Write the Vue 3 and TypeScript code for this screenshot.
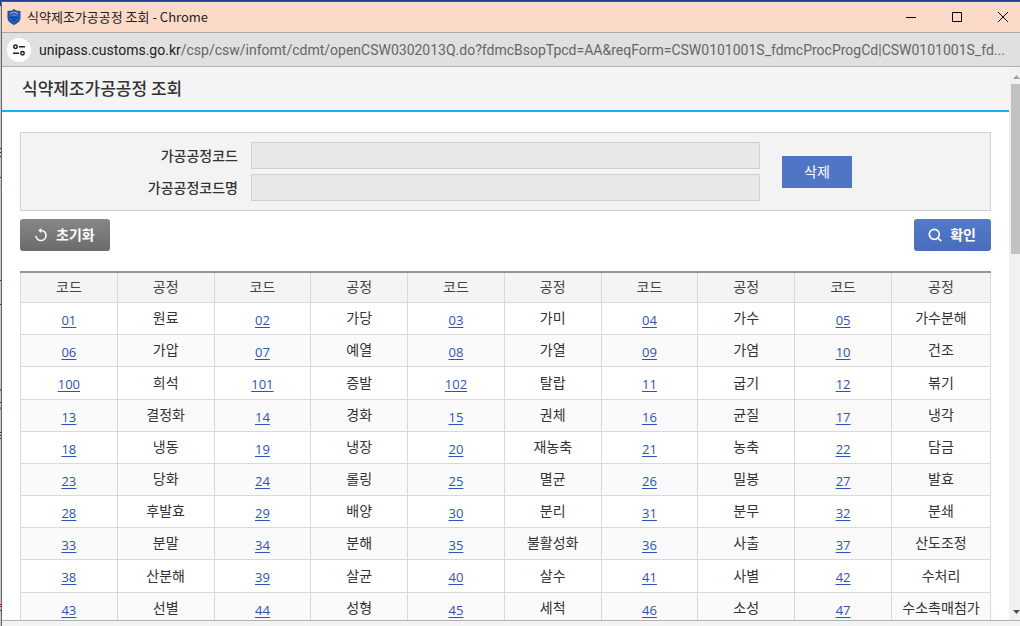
<script setup lang="ts">
import { ref } from 'vue'

interface Process {
  code: string
  name: string
}

const source: string[] = [
  '01 원료|02 가당|03 가미|04 가수|05 가수분해',
  '06 가압|07 예열|08 가열|09 가염|10 건조',
  '100 희석|101 증발|102 탈랍|11 굽기|12 볶기',
  '13 결정화|14 경화|15 권체|16 균질|17 냉각',
  '18 냉동|19 냉장|20 재농축|21 농축|22 담금',
  '23 당화|24 롤링|25 멸균|26 밀봉|27 발효',
  '28 후발효|29 배양|30 분리|31 분무|32 분쇄',
  '33 분말|34 분해|35 불활성화|36 사출|37 산도조정',
  '38 산분해|39 살균|40 살수|41 사별|42 수처리',
  '43 선별|44 성형|45 세척|46 소성|47 수소촉매첨가',
]

const rows: Process[][] = source.map((line) =>
  line.split('|').map((pair) => {
    const [code, name] = pair.split(' ')
    return { code, name }
  }),
)

const selectedCode = ref('')
const selectedName = ref('')

function select(item: Process) {
  selectedCode.value = item.code
  selectedName.value = item.name
}

function clear() {
  selectedCode.value = ''
  selectedName.value = ''
}
</script>

<template>
  <div class="desktop">
    <div class="window">
      <div class="titlebar">
        <svg class="shield" width="14" height="16" viewBox="0 0 14 16" aria-hidden="true">
          <path d="M7 0 9 1.5 13.5 2V9C13.5 12.5 10 14.6 7 16 4 14.6.5 12.5.5 9V2L5 1.5Z" fill="#24508c" />
          <path d="M7 2 12 3.4V9C12 11.5 9.5 13 7 14.2 4.500 13 2 11.500 2 9V3.400Z" fill="#1467d2" />
          <path d="M3 4.500 7 3l4 1.500" fill="none" stroke="#8fb4d9" />
          <path d="M4.500 6.200h5" stroke="#d8564e" stroke-width="1.400" />
          <path d="M3 8.500h8M5 11h4" stroke="#123f94" stroke-width="1.400" />
        </svg>
        <span class="window-title">식약제조가공공정 조회 - Chrome</span>
        <div class="controls">
          <button type="button" aria-label="최소화">
            <svg width="10" height="10" viewBox="0 0 10 10"><path d="M0 5.500h10" /></svg>
          </button>
          <button type="button" aria-label="최대화">
            <svg width="10" height="10" viewBox="0 0 10 10"><path d="M.5.5h9v9h-9z" /></svg>
          </button>
          <button type="button" aria-label="닫기">
            <svg width="10" height="10" viewBox="0 0 10 10"><path d="m0 0 10 10M10 0 0 10" /></svg>
          </button>
        </div>
      </div>

      <div class="addressbar">
        <button type="button" class="site-info" aria-label="사이트 정보">
          <svg width="12" height="12" viewBox="0 0 12 12" fill="none" stroke="#222" stroke-width="1.500">
            <circle cx="2.500" cy="2.700" r="1.700" />
            <path d="M6 2.700h6M0 9.300h6" />
            <circle cx="9.500" cy="9.300" r="1.700" />
          </svg>
        </button>
        <span class="url"><b>unipass.customs.go.kr</b>/csp/csw/infomt/cdmt/openCSW0302013Q.do?fdmcBsopTpcd=AA&amp;reqForm=CSW0101001S_fdmcProcProgCd|CSW0101001S_fd...</span>
      </div>

      <div class="viewport">
        <main class="page">
          <h1>식약제조가공공정 조회</h1>
          <div class="content">
            <form class="search" @submit.prevent>
              <div class="fields">
                <label for="code">가공공정코드</label>
                <input id="code" v-model="selectedCode" type="text" readonly />
                <label for="name">가공공정코드명</label>
                <input id="name" v-model="selectedName" type="text" readonly />
              </div>
              <button type="button" class="delete" @click="clear">삭제</button>
            </form>

            <div class="actions">
              <button type="button" class="action reset" @click="clear">
                <svg width="14" height="14" viewBox="0 0 14 14" fill="none" stroke="currentColor" stroke-width="1.700">
                  <path d="M5.500 2.500H7A5 5 0 1 1 2 8" />
                  <path d="M7.200 0v5L4.200 2.500z" fill="currentColor" stroke="none" />
                </svg>
                <span>초기화</span>
              </button>
              <button type="button" class="action confirm">
                <svg width="14" height="14" viewBox="0 0 14 14" fill="none" stroke="currentColor" stroke-width="1.700">
                  <circle cx="6.300" cy="6.300" r="5" />
                  <path d="m10 10 3.200 3.200" />
                </svg>
                <span>확인</span>
              </button>
            </div>

            <table>
              <thead>
                <tr>
                  <template v-for="n in 5" :key="n">
                    <th scope="col">코드</th>
                    <th scope="col">공정</th>
                  </template>
                </tr>
              </thead>
              <tbody>
                <tr v-for="(row, i) in rows" :key="i">
                  <template v-for="item in row" :key="item.code">
                    <td class="code"><a href="#" @click.prevent="select(item)">{{ item.code }}</a></td>
                    <td>{{ item.name }}</td>
                  </template>
                </tr>
              </tbody>
            </table>
          </div>
        </main>
        <div class="scrollbar" aria-hidden="true">
          <svg width="7" height="4" viewBox="0 0 7 4"><path d="M0 4 3.500 0 7 4z" fill="#a3a3a3" /></svg>
          <div class="thumb"></div>
          <svg width="7" height="4" viewBox="0 0 7 4"><path d="M0 0h7L3.500 4z" fill="#505050" /></svg>
        </div>
      </div>
    </div>
  </div>
</template>

<style>
body {
  margin: 0;
}
</style>

<style scoped>
* {
  box-sizing: border-box;
}

/* The one-pixel strip on the left shows the window behind this one. */
.desktop {
  height: 100vh;
  overflow: hidden;
  padding-left: 1px;
  background: linear-gradient(
    #1f3f91 0 6px, #c9c9c9 6px 148px, #333 148px 149px, #c9c9c9 149px 152px, #333 152px 153px,
    #c9c9c9 153px 156px, #333 156px 157px, #c9c9c9 157px 177px, #333 177px 178px, #c9c9c9 178px 183px,
    #c8c88a 183px 188px, #c9c9c9 188px 280px, #7a2a2a 280px 281px, #c9c9c9 281px 304px, #333 304px 305px,
    #c9c9c9 305px 389px, #777 389px 391px, #c9c9c9 391px 402px, #333 402px 403px, #c9c9c9 403px 407px,
    #b5884a 407px 410px, #c9c9c9 410px 432px, #333 432px 433px, #c9c9c9 433px 435px, #333 435px 436px,
    #c9c9c9 436px 438px, #333 438px 439px, #c9c9c9 439px 604px, #c00 604px 605px, #c9c9c9 605px 606px,
    #c00 606px 607px, #c9c9c9 607px 610px, #c00 610px 611px, #c9c9c9 611px
  );
  font-family: "Noto Sans CJK KR", sans-serif;
  font-size: 14px;
  color: #333;
}

.window {
  display: flex;
  flex-direction: column;
  height: 100%;
  border-top: 1px solid #1f3f91;
  border-left: 1px solid #666;
  background: #f3f3f3;
  padding-bottom: 5px;
}

.titlebar {
  display: flex;
  flex: none;
  align-items: center;
  height: 32px;
  padding-left: 5px;
  border-top: 1px solid #4a5480;
  border-bottom: 1px solid #aaa;
  background: #fcdac8;
}

.window-title {
  margin-left: 6px;
  font-size: 13px;
  line-height: 20px;
  color: #222;
}

.controls {
  display: flex;
  margin-left: auto;
  height: 100%;
}

.controls button {
  display: grid;
  place-items: center;
  width: 46px;
  padding: 0;
  border: 0;
  background: none;
}

.controls button:last-child {
  width: 40px;
  padding-left: 6px;
}

.controls path {
  fill: none;
  stroke: #000;
}

.addressbar {
  display: flex;
  flex: none;
  align-items: center;
  gap: 8px;
  height: 34px;
  padding: 0 0 0 5px;
  border-bottom: 1px solid #b0b0b0;
  background: #e0e0e0;
}

.site-info {
  display: grid;
  flex: none;
  place-items: center;
  width: 24px;
  height: 24px;
  padding: 0;
  border: 0;
  border-radius: 50%;
  background: #fff;
}

.url {
  overflow: hidden;
  font-family: Roboto, sans-serif;
  font-size: 14px;
  line-height: 20px;
  color: #666;
  white-space: nowrap;
}

.url b {
  font-weight: 400;
  color: #222;
}

.viewport {
  display: flex;
  flex: 1;
  min-height: 0;
  border-bottom: 1px solid #b0b0b0;
  background: #fff;
}

.page {
  flex: 1;
  min-width: 0;
  overflow: hidden;
}

h1 {
  margin: 0;
  padding: 0 20px 1px;
  border-bottom: 2px solid #16b0f4;
  background: #f4f4f4;
  font-size: 17px;
  font-weight: 500;
  line-height: 42px;
}

.content {
  padding: 20px 18px 0;
}

.search {
  display: flex;
  align-items: center;
  height: 79px;
  border: 1px solid #d2d2d2;
  background: #f3f3f3;
}

.fields {
  display: grid;
  flex: 0 1 739px;
  grid-template-columns: 217px 1fr;
  gap: 5px 13px;
  align-items: center;
}

label {
  padding-bottom: 2px;
  font-weight: 500;
  line-height: 20px;
  text-align: right;
}

input {
  width: 100%;
  min-width: 0;
  height: 27px;
  padding: 0 6px;
  border: 1px solid #d0d0d0;
  background: #e8e8e8;
  color: inherit;
  font: inherit;
}

.delete {
  width: 70px;
  height: 32px;
  margin-left: 22px;
  padding: 0 0 2px;
  border: 0;
  background: #4f75c5;
  color: #fff;
  font: inherit;
}

.actions {
  display: flex;
  justify-content: space-between;
  margin: 8px 0 20px;
}

.action {
  display: flex;
  align-items: center;
  gap: 8px;
  height: 32px;
  padding: 0 15px 0 14px;
  border: 0;
  border-radius: 3px;
  color: #fff;
  font: inherit;
  font-weight: 700;
}

.action span {
  padding-bottom: 2px;
}

.reset {
  background: linear-gradient(#878787, #6b6b6b);
}

.confirm {
  background: linear-gradient(#527bcd, #496dba);
}

table {
  width: 100%;
  border-collapse: collapse;
  border-top: 2px solid #959595;
  table-layout: fixed;
  text-align: center;
}

th,
td {
  height: 32px;
  padding: 0 0 2px;
  border: 1px solid #d9d9d9;
  line-height: 20px;
  white-space: nowrap;
}

th {
  height: 30px;
  border-top: 2px solid #959595;
  background: #f4f4f4;
  color: #444;
  font-weight: 400;
}

th:last-child {
  width: 99px;
}

tbody tr:nth-child(even) {
  background: #fafafa;
}

tbody tr:nth-child(6n + 3) td {
  height: 33px;
}

td.code {
  padding: 3px 0 0;
  font-family: "Open Sans", "Noto Sans", sans-serif;
  font-size: 13px;
}

a {
  color: #2b53bd;
  text-decoration: underline;
  text-underline-offset: 2px;
}

.scrollbar {
  display: flex;
  flex: none;
  flex-direction: column;
  align-items: flex-end;
  width: 11px;
  padding: 8px 0 6px 2px;
  background: #f1f1f1;
}

.scrollbar svg {
  flex: none;
}

.thumb {
  width: 9px;
  height: 170px;
  margin: 5px 0 auto;
  background: #c1c1c1;
}
</style>
